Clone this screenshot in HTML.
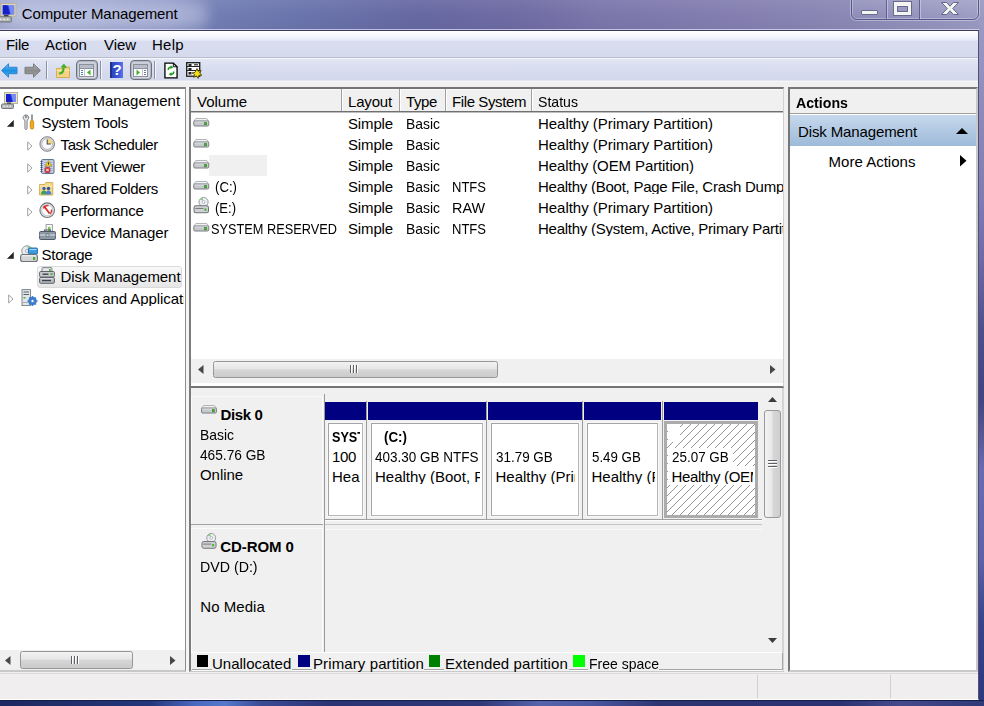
<!DOCTYPE html>
<html><head><meta charset="utf-8"><title>Computer Management</title>
<style>
html,body{margin:0;padding:0;}
body{width:984px;height:706px;overflow:hidden;position:relative;font-family:"Liberation Sans",sans-serif;font-size:15px;color:#000;background:#8d8cba;}
.a{position:absolute;box-sizing:border-box;}
.t{position:absolute;white-space:nowrap;color:#000;}
svg{position:absolute;overflow:visible;}
</style></head><body>
<!-- aero frame -->
<div class="a" id="titlebar" style="left:0;top:0;width:984px;height:31px;background:linear-gradient(90deg,#a6add2 0,#9fa8d2 80px,#8d97c6 170px,#727db4 215px,#6a74ac 300px,#6668a2 420px,#6f6ba4 520px,#7b76ab 600px,#8580b0 760px,#8b88b6 850px,#9a9ac3 984px);"></div>
<div class="a" style="left:0;top:0;width:984px;height:31px;background:linear-gradient(180deg,rgba(255,255,255,.07) 0,rgba(255,255,255,0) 50%,rgba(0,0,0,.03) 100%);"></div>
<div class="a" style="left:8px;top:3px;width:200px;height:24px;border-radius:12px;background:rgba(225,228,245,.38);filter:blur(7px);"></div>
<div class="a" id="rframe" style="left:978px;top:20px;width:6px;height:686px;background:linear-gradient(180deg,#9a9ac3 0,#8f8cba 80px,#807bb0 180px,#6f6aa0 240px,#4d5089 310px,#40457f 380px,#55558c 410px,#686db0 450px,#5c62a6 540px,#3a4488 600px,#2b387a 686px);"></div>
<div class="a" id="bframe" style="left:0;top:700px;width:984px;height:6px;border-top:1px solid #151d4a;background:linear-gradient(90deg,#1c2860 0,#24367a 150px,#4a68c0 195px,#5478cc 225px,#3a4a94 262px,#2a3474 330px,#2e3878 480px,#5664ac 540px,#4a58a0 590px,#2c3472 660px,#2a3272 840px,#454a8c 900px,#2f3878 984px);"></div>
<div class="a" style="left:0;top:29px;width:979px;height:1px;background:rgba(225,228,245,.7);"></div>
<!-- caption buttons -->
<div class="a" style="left:851px;top:-6px;width:128px;height:26px;border:1px solid #55578c;border-radius:0 0 6px 6px;box-shadow:0 0 0 1px rgba(255,255,255,.35), inset 0 0 0 1px rgba(255,255,255,.3);background:linear-gradient(180deg,rgba(255,255,255,.12),rgba(255,255,255,.02));"></div>
<div class="a" style="left:886px;top:0;width:1px;height:19px;background:#5f6095;box-shadow:1px 0 0 rgba(255,255,255,.35);"></div>
<div class="a" style="left:919px;top:0;width:1px;height:19px;background:#5f6095;box-shadow:1px 0 0 rgba(255,255,255,.35);"></div>
<div class="a" style="left:861px;top:10px;width:17px;height:5px;background:#f4f4f0;border:1px solid #6a6a90;border-radius:1px;"></div>
<div class="a" style="left:893.500px;top:1.500px;width:17px;height:13px;border:3.500px solid #f4f4f0;border-top-width:4px;outline:1px solid #6a6a90;box-shadow:inset 0 0 0 1px #6a6a90;"></div>
<svg style="left:940px;top:1px" width="20" height="15" viewBox="0 0 20 15"><path d="M1.500 1.500h5.200L10 5.200l3.300-3.700h5.200L12.700 7.500l5.800 6h-5.200L10 9.800l-3.300 3.700H1.500l5.800-6z" fill="#f4f4f0" stroke="#66678f" stroke-width="1"/></svg>

<!-- client area -->
<div class="a" style="left:0;top:30px;width:979px;height:670px;background:#f0f0f0;border-bottom:1px solid #fff;border-top:1px solid #3b3b5e;border-right:1px solid #50507a;"></div>
<!-- menu bar -->
<div class="a" style="left:0;top:31px;width:978px;height:26px;background:linear-gradient(180deg,#ffffff 0,#f6f8fd 5px,#e9ecf8 9px,#d8ddf0 10px,#d5daed 100%);"></div>
<div class="a" style="left:0;top:57px;width:978px;height:1px;background:#b9bccb;"></div>
<div class="a" style="left:0;top:58px;width:978px;height:1px;background:#f6f7fc;"></div>
<!-- toolbar -->
<div class="a" style="left:0;top:59px;width:978px;height:21px;background:linear-gradient(180deg,#e2e6f4 0,#dadff0 8px,#d4d9ec 16px,#d3d8ec 100%);"></div>
<div class="a" style="left:0;top:80px;width:978px;height:1px;background:#e3e6f0;"></div>
<div class="a" style="left:0;top:81px;width:978px;height:1px;background:#f4f5f8;"></div>
<svg style="left:1px;top:63px" width="17" height="15" viewBox="0 0 17 15"><defs><linearGradient id="gb" x1="0" y1="0" x2="0" y2="1"><stop offset="0" stop-color="#6fc3f5"/><stop offset=".5" stop-color="#1e8fe0"/><stop offset="1" stop-color="#49aef0"/></linearGradient><linearGradient id="gg" x1="0" y1="0" x2="0" y2="1"><stop offset="0" stop-color="#b8b8b8"/><stop offset=".5" stop-color="#8a8a8a"/><stop offset="1" stop-color="#a8a8a8"/></linearGradient></defs><path d="M0.600 7.500L7.500 0.800V4.300H16V10.700H7.500V14.200z" fill="url(#gb)" stroke="#2a86d4" stroke-width="1" stroke-linejoin="round"/></svg>
<svg style="left:24px;top:63px" width="17" height="15" viewBox="0 0 17 15"><path d="M16.400 7.500L9.500 0.800V4.300H1V10.700H9.500V14.200z" fill="url(#gg)" stroke="#7b7b7b" stroke-width="1" stroke-linejoin="round"/></svg>
<div class="a" style="left:46px;top:61px;width:1px;height:18px;background:#8b90a3;"></div>
<div class="a" style="left:47px;top:61px;width:1px;height:18px;background:#f3f5fb;"></div>
<div class="a" style="left:100px;top:61px;width:1px;height:18px;background:#8b90a3;"></div>
<div class="a" style="left:101px;top:61px;width:1px;height:18px;background:#f3f5fb;"></div>
<div class="a" style="left:154px;top:61px;width:1px;height:18px;background:#8b90a3;"></div>
<div class="a" style="left:155px;top:61px;width:1px;height:18px;background:#f3f5fb;"></div>
<svg style="left:55px;top:62px" width="16" height="17" viewBox="0 0 16 17"><path d="M1.500 6.500h5l1.500-1.500h6.500v10.500h-13z" fill="#f3d486" stroke="#d9ad4c"/><path d="M1.500 8.500h13" stroke="#fbe8b0"/><path d="M4 11.500c3 0 4.500-2 4.500-5.500" fill="none" stroke="#3fae2a" stroke-width="2.200"/><path d="M5.500 5.500L9 1.500l3 4.500z" fill="#3fae2a"/></svg>
<div class="a" style="left:75.5px;top:60px;width:22px;height:20px;border:1px solid #6c7180;border-radius:4px;background:linear-gradient(180deg,#c9ccd6,#d8dae2);box-shadow:inset 0 0 0 1px #b4b8c4;"></div>
<div class="a" style="left:129.5px;top:60px;width:22px;height:20px;border:1px solid #6c7180;border-radius:4px;background:linear-gradient(180deg,#c9ccd6,#d8dae2);box-shadow:inset 0 0 0 1px #b4b8c4;"></div>
<svg style="left:79px;top:64px" width="15" height="13" viewBox="0 0 15 13"><rect x=".5" y=".5" width="14" height="12" fill="#fff" stroke="#8a8f9c"/><rect x="1" y="1" width="13" height="3" fill="#b9bdc9"/><path d="M1 4.500h13" stroke="#8a8f9c"/><path d="M5.500 4.500v8" stroke="#c0c4cc"/><path d="M2 6.500h2M2 8.500h2M2 10.500h2" stroke="#4a7fd0"/><path d="M11.500 5.500v6L8 8.500z" fill="#43b02a"/></svg>
<svg style="left:133px;top:64px" width="15" height="13" viewBox="0 0 15 13"><rect x=".5" y=".5" width="14" height="12" fill="#fff" stroke="#8a8f9c"/><rect x="1" y="1" width="13" height="3" fill="#b9bdc9"/><path d="M1 4.500h13" stroke="#8a8f9c"/><path d="M9.500 4.500v8" stroke="#c0c4cc"/><path d="M11 6.500h2M11 8.500h2M11 10.500h2" stroke="#6b7a90"/><path d="M3.500 5.500v6L7 8.500z" fill="#43b02a"/></svg>
<div class="a" style="left:110px;top:62px;width:13px;height:16px;background:linear-gradient(90deg,#2b3fb8 0,#3b55d8 60%,#5a74e8 100%);box-shadow:inset 2px 0 0 #20308f;"></div>
<div class="t" style="left:112.500px;top:62px;font-size:15px;line-height:16px;font-weight:bold;color:#fff;">?</div>
<svg style="left:163.5px;top:61.5px" width="14" height="17" viewBox="0 0 15 18"><path d="M1 1h9l4 4v12H1z" fill="#fff" stroke="#000" stroke-width="1.400"/><path d="M10 1v4h4" fill="none" stroke="#000"/><path d="M4.500 8.500c0-2 1.500-3 3-3" fill="none" stroke="#1e9a1e" stroke-width="1.600"/><path d="M7 3.500l3 2-3 2z" fill="#1e9a1e"/><path d="M10.500 10c0 2-1.500 3-3 3" fill="none" stroke="#1e9a1e" stroke-width="1.600"/><path d="M8 11l-3 2 3 2z" fill="#1e9a1e"/></svg>
<svg style="left:186px;top:62px" width="17" height="17" viewBox="0 0 17 17"><rect x=".7" y=".7" width="13" height="13.500" fill="#fff" stroke="#222" stroke-width="1.400"/><path d="M1 4.500h13M1 8.500h13" stroke="#222"/><rect x="2.500" y="2" width="3" height="2" fill="#222"/><rect x="8" y="2" width="4" height="1.500" fill="#555"/><rect x="2.500" y="6" width="3" height="2" fill="#222"/><rect x="2.500" y="10" width="3" height="2.500" fill="#222"/><path d="M11 6.500l1.200 2.800 3-.8-1.600 2.500 2.200 2.200-3 .2-.6 3-1.800-2.500-2.600 1.400.8-2.900-2.600-1.500 3-.5z" fill="#f5e11a" stroke="#3a3300" stroke-width=".8"/></svg>

<!-- left tree pane -->
<div class="a" style="left:0;top:87px;width:186px;height:585px;background:#fff;border-top:2px solid #7d7d7d;border-right:1px solid #8e8e8e;border-bottom:2px solid #c8c8c8;"></div>
<div class="a" style="left:186px;top:87px;width:3px;height:585px;background:#f5f5f5;"></div>
<div class="a" style="left:37px;top:266px;width:145px;height:22px;border:1px solid #dadada;border-radius:3px;background:linear-gradient(180deg,#f9f9f9,#e6e6e6);"></div>
<svg style="left:0.5px;top:91.5px" width="17" height="17" viewBox="0 0 17 17"><rect x="3.500" y=".5" width="13" height="11" fill="#e9e2c9" stroke="#b9b4a0"/><rect x="5" y="2" width="10" height="8" fill="#2a3fe0"/><path d="M10 2h5v8h-3z" fill="#8f9df5" opacity=".8"/><path d="M5 2h4l2 8H5z" fill="#1420c8"/><path d="M6 10.500h4v2H6z" fill="#3a3a3a"/><rect x=".5" y="12" width="12" height="4.500" rx="1" fill="#b3b7b7" stroke="#767b7b"/><path d="M2.500 13.500h1.500v1.500h-1.500zM5.500 13.500h1.500v1.500h-1.500zM8.500 13.500h1.500v1.500h-1.500z" fill="#e6e8e8"/></svg>
<svg style="left:7px;top:119.5px" width="7" height="7" viewBox="0 0 7 7"><path d="M6.500 .5v6h-6z" fill="#262626" stroke="#262626" stroke-width=".6"/></svg>
<svg style="left:7px;top:251.5px" width="7" height="7" viewBox="0 0 7 7"><path d="M6.500 .5v6h-6z" fill="#262626" stroke="#262626" stroke-width=".6"/></svg>
<svg style="left:27px;top:141px" width="6" height="10" viewBox="0 0 6 10"><path d="M.7 1L5 5 .7 9z" fill="#fff" stroke="#a0a0a0" stroke-width="1"/></svg>
<svg style="left:27px;top:163px" width="6" height="10" viewBox="0 0 6 10"><path d="M.7 1L5 5 .7 9z" fill="#fff" stroke="#a0a0a0" stroke-width="1"/></svg>
<svg style="left:27px;top:185px" width="6" height="10" viewBox="0 0 6 10"><path d="M.7 1L5 5 .7 9z" fill="#fff" stroke="#a0a0a0" stroke-width="1"/></svg>
<svg style="left:27px;top:207px" width="6" height="10" viewBox="0 0 6 10"><path d="M.7 1L5 5 .7 9z" fill="#fff" stroke="#a0a0a0" stroke-width="1"/></svg>
<svg style="left:8px;top:294px" width="6" height="10" viewBox="0 0 6 10"><path d="M.7 1L5 5 .7 9z" fill="#fff" stroke="#a0a0a0" stroke-width="1"/></svg>
<svg style="left:22px;top:114px" width="13" height="16" viewBox="0 0 13 16"><path d="M3.500 .8c-1.800.6-2.600 2-2.300 3.500.2 1 .9 1.700 1.700 2v8.200c0 .6.500 1 1.100 1s1.100-.4 1.100-1V6.300c.9-.4 1.500-1.200 1.600-2.200C6.900 2.600 6 1.300 4.700.8v2.700H3.500z" fill="#dfe1e3" stroke="#777b80" stroke-width=".9"/><path d="M10 .5v6" stroke="#6d7175" stroke-width="1.400"/><rect x="8.300" y="6.500" width="3.400" height="8.500" rx="1.500" fill="#f2ac18" stroke="#c07d00" stroke-width=".8"/></svg>
<svg style="left:39px;top:136px" width="17" height="16" viewBox="0 0 17 16"><circle cx="8.200" cy="8" r="7.300" fill="#d9dbde" stroke="#7d8186" stroke-width="1"/><circle cx="8.200" cy="8" r="5.400" fill="#fbfbfc" stroke="#a9adb2" stroke-width=".8"/><path d="M8.200 8V2.600A5.400 5.400 0 0 1 13.600 8z" fill="#f3d57a"/><path d="M8.200 3.500V8h3.600" fill="none" stroke="#4a4e55" stroke-width="1.100"/></svg>
<svg style="left:40px;top:159px" width="15" height="15" viewBox="0 0 15 15"><rect x="1.500" y=".6" width="12.500" height="13.800" rx="1" fill="#c9d3e8" stroke="#56698f"/><path d="M4 3.500h8.500M4 5.500h8.500M4 7.500h8.500M4 9.500h8.500M4 11.500h8.500" stroke="#8fa2c8" stroke-width=".8"/><path d="M.5 2.500h2M.5 4.500h2M.5 6.500h2M.5 8.500h2M.5 10.500h2M.5 12.500h2" stroke="#3d4f73" stroke-width="1"/><path d="M8.500 1.500l3.200 5.500H5.300z" fill="#f6cf2a" stroke="#b18b00" stroke-width=".6"/><path d="M8.500 3.500v2" stroke="#222" stroke-width="1"/><rect x="5" y="8.500" width="5" height="5" rx="1" fill="#e03a3a" stroke="#9e1f1f" stroke-width=".6"/><path d="M6.300 9.800l2.400 2.400M8.700 9.800l-2.400 2.400" stroke="#fff" stroke-width="1"/></svg>
<svg style="left:39px;top:181px" width="15" height="15" viewBox="0 0 15 15"><path d="M.6 3.500h5l1.200-2h7v12.500H.6z" fill="#f4d98c" stroke="#d2a84a" stroke-width=".9"/><path d="M1 5h12.500" stroke="#fbeab8"/><circle cx="5" cy="7.500" r="1.700" fill="#3a5fb0"/><path d="M2 13.500c0-3 1.300-4 3-4s3 1 3 4z" fill="#3f9d5a"/><circle cx="9.500" cy="7.500" r="1.700" fill="#2f4f9a"/><path d="M6.800 13.500c0-3 1.200-4 2.700-4s2.800 1 2.800 4z" fill="#4a7fd0"/></svg>
<svg style="left:39px;top:202px" width="17" height="17" viewBox="0 0 17 17"><circle cx="8.200" cy="8.200" r="7.300" fill="#e1e3e6" stroke="#70757b" stroke-width="1.100"/><circle cx="8.200" cy="8.200" r="5.500" fill="#fdfdfd" stroke="#b4b8bd" stroke-width=".7"/><path d="M5 4l5.500 7.500" stroke="#d8231f" stroke-width="1.700"/><path d="M4.500 6.500a4.500 4.500 0 0 1 5-2.700" fill="none" stroke="#d8231f" stroke-width="1.300"/><path d="M12.500 7.500a4.500 4.500 0 0 1-1.500 4.300" fill="none" stroke="#d8231f" stroke-width="1.300"/></svg>
<svg style="left:39px;top:224px" width="17" height="16" viewBox="0 0 17 16"><rect x="7" y=".6" width="6.500" height="7.500" fill="#f4f6f4" stroke="#8a8f94" stroke-width=".8"/><rect x="9" y="3" width="2.500" height="4" fill="#7bc45c"/><path d="M5.500 7.500V6h6v1.500" fill="none" stroke="#555b62" stroke-width="1.200"/><rect x=".6" y="7.500" width="15.800" height="8" rx="1" fill="#8f9aa8" stroke="#4f5965" stroke-width="1"/><path d="M.6 11h15.800" stroke="#dfe4ea" stroke-width="1"/><rect x="7" y="10" width="3" height="2.500" fill="#d5dae0" stroke="#4f5965" stroke-width=".6"/></svg>
<svg style="left:20px;top:245px" width="18" height="17" viewBox="0 0 18 17"><circle cx="7" cy="6" r="5.300" fill="#e8ebee" stroke="#8e9499" stroke-width=".9"/><circle cx="7" cy="6" r="1.500" fill="#fff" stroke="#8e9499" stroke-width=".7"/><path d="M7 .9a5 5 0 0 1 4 2.200L8.300 5z" fill="#8fd07e" opacity=".8"/><rect x="8.500" y="3" width="9" height="6" rx="1" fill="#3e9bdc" stroke="#1d6fae" stroke-width=".9"/><path d="M9.500 4.500h7" stroke="#a8d8f6" stroke-width="1"/><rect x=".6" y="9.500" width="16.800" height="7" rx="2" fill="#d3d5d7" stroke="#6f7478" stroke-width="1.100"/><path d="M2 10.800h14" stroke="#f4f5f6"/><rect x="13" y="12" width="2.200" height="3" fill="#4caf2e"/></svg>
<svg style="left:39px;top:267px" width="16" height="17" viewBox="0 0 16 17"><rect x="3" y=".6" width="10" height="5" rx="1" fill="#e4e6e8" stroke="#74797e" stroke-width=".9"/><rect x="10" y="2" width="1.800" height="2" fill="#58b03a"/><rect x=".6" y="4.500" width="14.800" height="5.500" rx="1.200" fill="#c9cccf" stroke="#5f6469" stroke-width="1"/><path d="M3.500 7.200h6" stroke="#3e4246" stroke-width="1.400"/><rect x="11.500" y="6" width="2" height="2.200" fill="#58b03a"/><rect x=".6" y="10.500" width="14.800" height="5.800" rx="1.200" fill="#b5b9bd" stroke="#5f6469" stroke-width="1"/><path d="M3 13.500h9" stroke="#3e4246" stroke-width="1.400"/><path d="M1.500 11.700h13" stroke="#eceef0" stroke-width=".8"/></svg>
<svg style="left:21px;top:289px" width="17" height="18" viewBox="0 0 17 18"><rect x="1" y=".6" width="8.500" height="16" fill="#e3e6e9" stroke="#767c83" stroke-width=".9"/><path d="M2.500 3h5.500M2.500 5.500h5.500" stroke="#5a6067" stroke-width="1.200"/><rect x="2.500" y="8" width="2" height="1.500" fill="#4caf2e"/><path d="M1 13.500h8.500" stroke="#a9aeb4"/><g transform="translate(11.500 12)"><circle r="3.300" fill="none" stroke="#3a7ed0" stroke-width="2"/><path d="M0-5v10M-5 0h10M-3.500-3.500l7 7M3.500-3.500l-7 7" stroke="#3a7ed0" stroke-width="1.400"/><circle r="1.600" fill="#fff" stroke="#2a62ad" stroke-width=".6"/></g></svg>
<!-- tree hscroll -->
<div class="a" style="left:0;top:650px;width:185px;height:20px;background:#f0f0f0;"></div>
<div class="a" style="left:20px;top:651px;width:113px;height:18px;border:1px solid #979797;border-radius:2.500px;background:linear-gradient(180deg,#f2f2f2 0,#e6e6e6 45%,#d6d6d6 52%,#cbcbcb 100%);"></div>
<div class="a" style="left:71px;top:656px;width:1px;height:8px;background:#5d6066;box-shadow:3px 0 0 #5d6066,6px 0 0 #5d6066,1px 0 0 #fff,4px 0 0 #fff,7px 0 0 #fff;"></div>
<svg style="left:5px;top:655.500px" width="5.500" height="9" viewBox="0 0 5.500 9"><path d="M5.500 0v9L0 4.500z" fill="#484848"/></svg>
<svg style="left:170px;top:655.500px" width="5.500" height="9" viewBox="0 0 5.500 9"><path d="M0 0v9l5.500-4.500z" fill="#484848"/></svg>

<!-- volume list -->
<div class="a" style="left:189px;top:87px;width:595px;height:301px;background:#fff;border:2px solid #747474;border-left-color:#7c7c7c;border-right:1px solid #d0d0d0;"></div>
<div class="a" style="left:191px;top:89px;width:592px;height:22px;background:#f0f0f0;border-top:1px solid #fafafa;"></div>
<div class="a" style="left:191px;top:111px;width:592px;height:1px;background:#707070;"></div><div class="a" style="left:191px;top:112px;width:592px;height:1px;background:#bdbdbd;"></div>
<div class="a hs" style="left:341px;"></div><div class="a hs" style="left:399px;"></div><div class="a hs" style="left:445px;"></div><div class="a hs" style="left:531px;"></div>
<style>.hs{top:89px;width:2px;height:22px;background:#a0a0a0;border-right:1px solid #fff;}</style>
<div class="a" style="left:209px;top:155px;width:58px;height:21px;background:#f0f0f0;"></div>
<!-- list hscroll -->
<div class="a" style="left:191px;top:359px;width:592px;height:24px;background:#f0f0f0;"></div>
<div class="a" style="left:213px;top:361px;width:285px;height:17px;border:1px solid #979797;border-radius:2.500px;background:linear-gradient(180deg,#f2f2f2 0,#e6e6e6 45%,#d6d6d6 52%,#cbcbcb 100%);"></div>
<div class="a" style="left:350px;top:365px;width:1px;height:8px;background:#5d6066;box-shadow:3px 0 0 #5d6066,6px 0 0 #5d6066,1px 0 0 #fff,4px 0 0 #fff,7px 0 0 #fff;"></div>
<svg style="left:198px;top:365px" width="5.500" height="9" viewBox="0 0 5.500 9"><path d="M5.500 0v9L0 4.500z" fill="#484848"/></svg>
<svg style="left:769.500px;top:365px" width="5.500" height="9" viewBox="0 0 5.500 9"><path d="M0 0v9l5.500-4.500z" fill="#484848"/></svg>

<!-- disk graphical pane -->
<div class="a" style="left:189px;top:388px;width:595px;height:284px;background:#f0f0f0;border-left:2px solid #7c7c7c;border-bottom:2px solid #c9c9c9;border-right:2px solid #d4d4d4;"></div>
<div class="a" style="left:191px;top:396px;width:131px;height:1px;background:#fafafa;"></div>
<div class="a" style="left:191px;top:396px;width:1px;height:128px;background:#fafafa;"></div>
<div class="a" style="left:322px;top:396px;width:1px;height:128px;background:#fbfbfb;"></div>
<div class="a" style="left:324px;top:394px;width:1px;height:258px;background:#9a9a9a;"></div>
<div class="a" style="left:191px;top:524px;width:132px;height:1px;background:#a0a0a0;"></div>
<div class="a" style="left:325px;top:519px;width:437px;height:1px;background:#a0a0a0;"></div>
<div class="a" style="left:325px;top:520px;width:437px;height:1px;background:#fdfdfd;"></div>
<div class="a" style="left:325px;top:524px;width:437px;height:1px;background:#c4c4c4;"></div>
<div class="a" style="left:191px;top:528px;width:131px;height:1px;background:#fafafa;"></div>
<div class="a" style="left:325px;top:529px;width:437px;height:1px;background:#fafafa;"></div>
<div class="a" style="left:191px;top:528px;width:1px;height:124px;background:#fafafa;"></div>
<div class="a" style="left:322px;top:528px;width:1px;height:124px;background:#fbfbfb;"></div>
<div class="a" style="left:325px;top:402px;width:40.5px;height:18px;background:#000080;"></div>
<div class="a" style="left:328px;top:423px;width:34.5px;height:93px;background:#fff;border:1px solid #a3a3a3;border-right-color:#b8b8b8;border-bottom-color:#b8b8b8;box-shadow:0 0 0 1px #f8f8f8;"></div>
<div class="a" style="left:368px;top:402px;width:117.5px;height:18px;background:#000080;"></div>
<div class="a" style="left:366.4px;top:401px;width:1px;height:118px;background:#9c9c9c;"></div>
<div class="a" style="left:371px;top:423px;width:111.5px;height:93px;background:#fff;border:1px solid #a3a3a3;border-right-color:#b8b8b8;border-bottom-color:#b8b8b8;box-shadow:0 0 0 1px #f8f8f8;"></div>
<div class="a" style="left:488px;top:402px;width:93.5px;height:18px;background:#000080;"></div>
<div class="a" style="left:486.4px;top:401px;width:1px;height:118px;background:#9c9c9c;"></div>
<div class="a" style="left:491px;top:423px;width:87.5px;height:93px;background:#fff;border:1px solid #a3a3a3;border-right-color:#b8b8b8;border-bottom-color:#b8b8b8;box-shadow:0 0 0 1px #f8f8f8;"></div>
<div class="a" style="left:583.7px;top:402px;width:77.29999999999995px;height:18px;background:#000080;"></div>
<div class="a" style="left:582.1px;top:401px;width:1px;height:118px;background:#9c9c9c;"></div>
<div class="a" style="left:586.7px;top:423px;width:71.3px;height:93px;background:#fff;border:1px solid #a3a3a3;border-right-color:#b8b8b8;border-bottom-color:#b8b8b8;box-shadow:0 0 0 1px #f8f8f8;"></div>
<div class="a" style="left:663.8px;top:402px;width:94.5px;height:18px;background:#000080;"></div>
<div class="a" style="left:662.2px;top:401px;width:1px;height:118px;background:#9c9c9c;"></div>
<div class="a" style="left:664.2px;top:421px;width:93.9px;height:97px;border:3px solid #ababab;background:#fff repeating-linear-gradient(135deg,transparent 0,transparent 4.95px,#959595 4.95px,#959595 5.657px);"></div>
<div class="a" style="left:668px;top:424px;width:11.500px;height:18px;background:#fff;"></div>
<div class="a" style="left:668px;top:448px;width:64.500px;height:18px;background:#fff;"></div>
<div class="a" style="left:668px;top:466px;width:86.500px;height:19px;background:#fff;"></div>
<div class="a" style="left:763px;top:389px;width:19px;height:263px;background:#f0f0f0;"></div>
<div class="a" style="left:764px;top:410px;width:17px;height:108px;border:1px solid #979797;border-radius:3px;background:linear-gradient(90deg,#f3f3f3 0,#e8e8e8 45%,#d6d6d6 55%,#cfcfcf 100%);"></div>
<div class="a" style="left:768px;top:460px;width:9px;height:1px;background:#5d6066;box-shadow:0 3px 0 #5d6066,0 6px 0 #5d6066,0 1px 0 #fff,0 4px 0 #fff,0 7px 0 #fff;"></div>
<svg style="left:768px;top:396.500px" width="9" height="5"><path d="M0 5h9L4.500 0z" fill="#3c3c3c"/></svg>
<svg style="left:768px;top:637.500px" width="9" height="5"><path d="M0 0h9L4.500 5z" fill="#3c3c3c"/></svg>
<div class="a" style="left:191px;top:652px;width:591px;height:1px;background:#fdfdfd;"></div>
<div class="a" style="left:192px;top:669px;width:590px;height:1px;background:#a6a6a6;"></div>
<div class="a" style="left:192px;top:670px;width:591px;height:1px;background:#fbfbfb;"></div>
<div class="a" style="left:782px;top:653px;width:1px;height:17px;background:#a6a6a6;"></div>
<div class="a" style="left:211.5px;top:655px;width:80px;height:16px;background:#f0f0f0;"></div>
<div class="a" style="left:312px;top:655px;width:112px;height:16px;background:#f0f0f0;"></div>
<div class="a" style="left:443.5px;top:655px;width:125px;height:16px;background:#f0f0f0;"></div>
<div class="a" style="left:588px;top:655px;width:71px;height:16px;background:#f0f0f0;"></div>
<div class="a" style="left:196.5px;top:655px;width:11.500px;height:12px;background:#000000;"></div>
<div class="a" style="left:298px;top:655px;width:11.500px;height:12px;background:#000080;"></div>
<div class="a" style="left:428.5px;top:655px;width:11.500px;height:12px;background:#008000;"></div>
<div class="a" style="left:573px;top:655px;width:11.500px;height:12px;background:#00ff00;"></div>

<!-- actions pane -->
<div class="a" style="left:788px;top:87px;width:190px;height:585px;background:#fff;border:2px solid #767676;border-right:2px solid #c9c9c9;border-bottom:2px solid #c9c9c9;"></div>
<div class="a" style="left:790px;top:89px;width:186px;height:24px;background:#f0f0f0;"></div>
<div class="a" style="left:790px;top:113px;width:186px;height:1px;background:#a0a0a0;"></div>
<div class="a" style="left:790px;top:115px;width:186px;height:30.500px;background:linear-gradient(180deg,#c6d8ec 0,#b2c9e3 50%,#9dbad9 100%);"></div>
<svg style="left:955.500px;top:127.500px" width="12" height="6"><path d="M0 6h12L6 0z" fill="#000"/></svg>
<svg style="left:960px;top:155px" width="6.500" height="11.500" viewBox="0 0 6.500 11.500"><path d="M0 0v11.500l6.500-5.750z" fill="#000"/></svg>

<!-- status bar -->
<div class="a" style="left:0;top:673px;width:978px;height:26px;background:#f0eeee;border-top:1px solid #dcdcdc;"></div>
<div class="a" style="left:757px;top:675px;width:1px;height:23px;background:#d0d0d0;"></div>
<div class="a" style="left:890px;top:675px;width:1px;height:23px;background:#d0d0d0;"></div>

<svg style="left:192.5px;top:118px" width="16.5" height="8.5" viewBox="0 0 17 9"><path d="M2.800 .5h11.400l2.300 3H.5z" fill="#f1f2f3" stroke="#9a9ea2" stroke-width=".8" stroke-linejoin="round"/><rect x=".55" y="3.200" width="15.900" height="5.300" rx="1.300" fill="#c6c9cc" stroke="#74787c" stroke-width="1"/><path d="M1.500 4.200h14" stroke="#e4e6e8" stroke-width=".9"/><rect x="12" y="4.500" width="2.300" height="2.800" fill="#46b02a" stroke="#2f7f1e" stroke-width=".5"/></svg>
<svg style="left:192.5px;top:139px" width="16.5" height="8.5" viewBox="0 0 17 9"><path d="M2.800 .5h11.400l2.300 3H.5z" fill="#f1f2f3" stroke="#9a9ea2" stroke-width=".8" stroke-linejoin="round"/><rect x=".55" y="3.200" width="15.900" height="5.300" rx="1.300" fill="#c6c9cc" stroke="#74787c" stroke-width="1"/><path d="M1.500 4.200h14" stroke="#e4e6e8" stroke-width=".9"/><rect x="12" y="4.500" width="2.300" height="2.800" fill="#46b02a" stroke="#2f7f1e" stroke-width=".5"/></svg>
<svg style="left:192.5px;top:160px" width="16.5" height="8.5" viewBox="0 0 17 9"><path d="M2.800 .5h11.400l2.300 3H.5z" fill="#f1f2f3" stroke="#9a9ea2" stroke-width=".8" stroke-linejoin="round"/><rect x=".55" y="3.200" width="15.900" height="5.300" rx="1.300" fill="#c6c9cc" stroke="#74787c" stroke-width="1"/><path d="M1.500 4.200h14" stroke="#e4e6e8" stroke-width=".9"/><rect x="12" y="4.500" width="2.300" height="2.800" fill="#46b02a" stroke="#2f7f1e" stroke-width=".5"/></svg>
<svg style="left:192.5px;top:181px" width="16.5" height="8.5" viewBox="0 0 17 9"><path d="M2.800 .5h11.400l2.300 3H.5z" fill="#f1f2f3" stroke="#9a9ea2" stroke-width=".8" stroke-linejoin="round"/><rect x=".55" y="3.200" width="15.900" height="5.300" rx="1.300" fill="#c6c9cc" stroke="#74787c" stroke-width="1"/><path d="M1.500 4.200h14" stroke="#e4e6e8" stroke-width=".9"/><rect x="12" y="4.500" width="2.300" height="2.800" fill="#46b02a" stroke="#2f7f1e" stroke-width=".5"/></svg>
<svg style="left:192.5px;top:223px" width="16.5" height="8.5" viewBox="0 0 17 9"><path d="M2.800 .5h11.400l2.300 3H.5z" fill="#f1f2f3" stroke="#9a9ea2" stroke-width=".8" stroke-linejoin="round"/><rect x=".55" y="3.200" width="15.900" height="5.300" rx="1.300" fill="#c6c9cc" stroke="#74787c" stroke-width="1"/><path d="M1.500 4.200h14" stroke="#e4e6e8" stroke-width=".9"/><rect x="12" y="4.500" width="2.300" height="2.800" fill="#46b02a" stroke="#2f7f1e" stroke-width=".5"/></svg>
<svg style="left:192.5px;top:196.5px" width="16.500" height="16.500" viewBox="0 0 17 18"><circle cx="11" cy="5.500" r="5" fill="#eef1f4" stroke="#8d9297"/><circle cx="11" cy="5.500" r="1.600" fill="#fff" stroke="#9aa0a6" stroke-width=".8"/><path d="M7 3a4.700 4.700 0 0 1 3-2.100l.6 3z" fill="#7cc96a" opacity=".9"/><rect x=".6" y="9.600" width="15.800" height="7.600" rx="2" fill="#cfd1d3" stroke="#6f7376" stroke-width="1.100"/><path d="M2 12.500h9" stroke="#6f7376"/><rect x="12" y="12.500" width="2.200" height="2.500" fill="#4caf2e"/></svg>
<svg style="left:201px;top:405.3px" width="16" height="8.6" viewBox="0 0 17 9"><path d="M2.800 .5h11.400l2.300 3H.5z" fill="#f1f2f3" stroke="#9a9ea2" stroke-width=".8" stroke-linejoin="round"/><rect x=".55" y="3.200" width="15.900" height="5.300" rx="1.300" fill="#c6c9cc" stroke="#74787c" stroke-width="1"/><path d="M1.500 4.200h14" stroke="#e4e6e8" stroke-width=".9"/><rect x="12" y="4.500" width="2.300" height="2.800" fill="#46b02a" stroke="#2f7f1e" stroke-width=".5"/></svg>
<svg style="left:201px;top:533px" width="16" height="16" viewBox="0 0 17 18"><circle cx="11" cy="5.500" r="5" fill="#eef1f4" stroke="#8d9297"/><circle cx="11" cy="5.500" r="1.600" fill="#fff" stroke="#9aa0a6" stroke-width=".8"/><path d="M7 3a4.700 4.700 0 0 1 3-2.100l.6 3z" fill="#7cc96a" opacity=".9"/><rect x=".6" y="9.600" width="15.800" height="7.600" rx="2" fill="#cfd1d3" stroke="#6f7376" stroke-width="1.100"/><path d="M2 12.500h9" stroke="#6f7376"/><rect x="12" y="12.500" width="2.200" height="2.500" fill="#4caf2e"/></svg>
<svg style="left:-3.5px;top:2.5px" width="19.500" height="19.500" viewBox="0 0 17 17"><rect x="3.500" y=".5" width="13" height="11" fill="#e9e2c9" stroke="#b9b4a0"/><rect x="5" y="2" width="10" height="8" fill="#2a3fe0"/><path d="M10 2h5v8h-3z" fill="#8f9df5" opacity=".8"/><path d="M5 2h4l2 8H5z" fill="#1420c8"/><path d="M6 10.500h4v2H6z" fill="#3a3a3a"/><rect x=".5" y="12" width="12" height="4.500" rx="1" fill="#b3b7b7" stroke="#767b7b"/><path d="M2.500 13.500h1.500v1.500h-1.500zM5.500 13.500h1.500v1.500h-1.500zM8.500 13.500h1.500v1.500h-1.500z" fill="#e6e8e8"/></svg>
<div class="t" style="left:21.7px;top:6.00px;font-size:15px;line-height:15px;letter-spacing:-0.084px;">Computer Management</div>
<div class="t" style="left:6px;top:37.30px;font-size:15px;line-height:15px;letter-spacing:-0.293px;">File</div>
<div class="t" style="left:45px;top:37.30px;font-size:15px;line-height:15px;letter-spacing:0.049px;">Action</div>
<div class="t" style="left:104px;top:37.30px;font-size:15px;line-height:15px;letter-spacing:-0.062px;">View</div>
<div class="t" style="left:152px;top:37.30px;font-size:15px;line-height:15px;letter-spacing:0.285px;">Help</div>
<div class="t" style="left:22.5px;top:93.30px;font-size:15px;line-height:15px;">Computer Management</div>
<div class="t" style="left:41.5px;top:115.30px;font-size:15px;line-height:15px;letter-spacing:-0.203px;">System Tools</div>
<div class="t" style="left:60.5px;top:137.30px;font-size:15px;line-height:15px;letter-spacing:-0.362px;">Task Scheduler</div>
<div class="t" style="left:60.5px;top:159.30px;font-size:15px;line-height:15px;letter-spacing:-0.301px;">Event Viewer</div>
<div class="t" style="left:60.5px;top:181.30px;font-size:15px;line-height:15px;letter-spacing:-0.362px;">Shared Folders</div>
<div class="t" style="left:60.5px;top:203.30px;font-size:15px;line-height:15px;letter-spacing:-0.261px;">Performance</div>
<div class="t" style="left:60.5px;top:225.30px;font-size:15px;line-height:15px;letter-spacing:-0.087px;">Device Manager</div>
<div class="t" style="left:41.5px;top:247.30px;font-size:15px;line-height:15px;letter-spacing:-0.221px;">Storage</div>
<div class="t" style="left:60.5px;top:269.30px;font-size:15px;line-height:15px;letter-spacing:-0.059px;">Disk Management</div>
<div class="t" style="left:41.5px;top:291.30px;font-size:15px;line-height:15px;letter-spacing:-0.092px;width:142px;overflow:hidden;">Services and Applications</div>
<div class="t" style="left:197px;top:94.30px;font-size:15px;line-height:15px;">Volume</div>
<div class="t" style="left:348px;top:94.30px;font-size:15px;line-height:15px;letter-spacing:-0.174px;">Layout</div>
<div class="t" style="left:406px;top:94.30px;font-size:15px;line-height:15px;letter-spacing:-0.383px;">Type</div>
<div class="t" style="left:452px;top:94.30px;font-size:15px;line-height:15px;letter-spacing:-0.396px;">File System</div>
<div class="t" style="left:538px;top:94.30px;font-size:15px;line-height:15px;"><span style="display:inline-block;transform-origin:0 0;transform:scaleX(0.9405)">Status</span></div>
<div class="t" style="left:348px;top:116.30px;font-size:15px;line-height:15px;letter-spacing:-0.143px;">Simple</div>
<div class="t" style="left:406px;top:116.30px;font-size:15px;line-height:15px;"><span style="display:inline-block;transform-origin:0 0;transform:scaleX(0.9267)">Basic</span></div>
<div class="t" style="left:348px;top:137.30px;font-size:15px;line-height:15px;letter-spacing:-0.143px;">Simple</div>
<div class="t" style="left:406px;top:137.30px;font-size:15px;line-height:15px;"><span style="display:inline-block;transform-origin:0 0;transform:scaleX(0.9267)">Basic</span></div>
<div class="t" style="left:348px;top:158.30px;font-size:15px;line-height:15px;letter-spacing:-0.143px;">Simple</div>
<div class="t" style="left:406px;top:158.30px;font-size:15px;line-height:15px;"><span style="display:inline-block;transform-origin:0 0;transform:scaleX(0.9267)">Basic</span></div>
<div class="t" style="left:348px;top:179.30px;font-size:15px;line-height:15px;letter-spacing:-0.143px;">Simple</div>
<div class="t" style="left:406px;top:179.30px;font-size:15px;line-height:15px;"><span style="display:inline-block;transform-origin:0 0;transform:scaleX(0.9267)">Basic</span></div>
<div class="t" style="left:348px;top:200.30px;font-size:15px;line-height:15px;letter-spacing:-0.143px;">Simple</div>
<div class="t" style="left:406px;top:200.30px;font-size:15px;line-height:15px;"><span style="display:inline-block;transform-origin:0 0;transform:scaleX(0.9267)">Basic</span></div>
<div class="t" style="left:348px;top:221.30px;font-size:15px;line-height:15px;letter-spacing:-0.143px;">Simple</div>
<div class="t" style="left:406px;top:221.30px;font-size:15px;line-height:15px;"><span style="display:inline-block;transform-origin:0 0;transform:scaleX(0.9267)">Basic</span></div>
<div class="t" style="left:452px;top:179.30px;font-size:15px;line-height:15px;"><span style="display:inline-block;transform-origin:0 0;transform:scaleX(0.8680)">NTFS</span></div>
<div class="t" style="left:452px;top:200.30px;font-size:15px;line-height:15px;"><span style="display:inline-block;transform-origin:0 0;transform:scaleX(0.9578)">RAW</span></div>
<div class="t" style="left:452px;top:221.30px;font-size:15px;line-height:15px;"><span style="display:inline-block;transform-origin:0 0;transform:scaleX(0.8680)">NTFS</span></div>
<div class="t" style="left:538px;top:116.30px;font-size:15px;line-height:15px;letter-spacing:-0.033px;">Healthy (Primary Partition)</div>
<div class="t" style="left:538px;top:137.30px;font-size:15px;line-height:15px;letter-spacing:-0.033px;">Healthy (Primary Partition)</div>
<div class="t" style="left:538px;top:158.30px;font-size:15px;line-height:15px;letter-spacing:-0.104px;">Healthy (OEM Partition)</div>
<div class="t" style="left:538px;top:179.30px;font-size:15px;line-height:15px;letter-spacing:-0.253px;width:245px;overflow:hidden;">Healthy (Boot, Page File, Crash Dump, Primary Partition)</div>
<div class="t" style="left:538px;top:200.30px;font-size:15px;line-height:15px;letter-spacing:-0.033px;">Healthy (Primary Partition)</div>
<div class="t" style="left:538px;top:221.30px;font-size:15px;line-height:15px;letter-spacing:-0.255px;width:245px;overflow:hidden;">Healthy (System, Active, Primary Partition)</div>
<div class="t" style="left:215px;top:179.30px;font-size:15px;line-height:15px;"><span style="display:inline-block;transform-origin:0 0;transform:scaleX(0.8800)">(C:)</span></div>
<div class="t" style="left:215px;top:200.30px;font-size:15px;line-height:15px;"><span style="display:inline-block;transform-origin:0 0;transform:scaleX(0.8688)">(E:)</span></div>
<div class="t" style="left:211px;top:221.30px;font-size:15px;line-height:15px;"><span style="display:inline-block;transform-origin:0 0;transform:scaleX(0.8507)">SYSTEM RESERVED</span></div>
<div class="t" style="left:795.5px;top:94.80px;font-size:15px;line-height:15px;font-weight:bold;"><span style="display:inline-block;transform-origin:0 0;transform:scaleX(0.9452)">Actions</span></div>
<div class="t" style="left:798px;top:124.30px;font-size:15px;line-height:15px;letter-spacing:-0.126px;">Disk Management</div>
<div class="t" style="left:828.5px;top:153.80px;font-size:15px;line-height:15px;letter-spacing:0.023px;">More Actions</div>
<div class="t" style="left:220.5px;top:407.30px;font-size:15px;line-height:15px;font-weight:bold;letter-spacing:-0.367px;">Disk 0</div>
<div class="t" style="left:200px;top:427.30px;font-size:15px;line-height:15px;"><span style="display:inline-block;transform-origin:0 0;transform:scaleX(0.9267)">Basic</span></div>
<div class="t" style="left:200px;top:447.30px;font-size:15px;line-height:15px;"><span style="display:inline-block;transform-origin:0 0;transform:scaleX(0.9133)">465.76 GB</span></div>
<div class="t" style="left:200px;top:467.30px;font-size:15px;line-height:15px;letter-spacing:-0.060px;">Online</div>
<div class="t" style="left:332px;top:429.30px;font-size:15px;line-height:15px;font-weight:bold;width:27.5px;overflow:hidden;"><span style="display:inline-block;transform-origin:0 0;transform:scaleX(0.8429)">SYSTEM RESERVED</span></div>
<div class="t" style="left:332px;top:449.30px;font-size:15px;line-height:15px;letter-spacing:-0.344px;width:27.5px;overflow:hidden;">100 MB NTFS</div>
<div class="t" style="left:332px;top:469.30px;font-size:15px;line-height:15px;width:27.5px;overflow:hidden;">Healthy (System, Active</div>
<div class="t" style="left:384px;top:429.30px;font-size:15px;line-height:15px;font-weight:bold;"><span style="display:inline-block;transform-origin:0 0;transform:scaleX(0.8905)">(C:)</span></div>
<div class="t" style="left:375px;top:449.30px;font-size:15px;line-height:15px;"><span style="display:inline-block;transform-origin:0 0;transform:scaleX(0.8995)">403.30 GB NTFS</span></div>
<div class="t" style="left:375px;top:469.30px;font-size:15px;line-height:15px;width:104.5px;overflow:hidden;">Healthy (Boot, Page File</div>
<div class="t" style="left:495.5px;top:449.30px;font-size:15px;line-height:15px;"><span style="display:inline-block;transform-origin:0 0;transform:scaleX(0.8960)">31.79 GB</span></div>
<div class="t" style="left:495.5px;top:469.30px;font-size:15px;line-height:15px;width:79.5px;overflow:hidden;">Healthy (Primary Partition)</div>
<div class="t" style="left:591.5px;top:449.30px;font-size:15px;line-height:15px;"><span style="display:inline-block;transform-origin:0 0;transform:scaleX(0.8865)">5.49 GB</span></div>
<div class="t" style="left:591.5px;top:469.30px;font-size:15px;line-height:15px;width:63px;overflow:hidden;">Healthy (Primary Partition)</div>
<div class="t" style="left:671.5px;top:449.30px;font-size:15px;line-height:15px;"><span style="display:inline-block;transform-origin:0 0;transform:scaleX(0.8960)">25.07 GB</span></div>
<div class="t" style="left:671.5px;top:469.30px;font-size:15px;line-height:15px;letter-spacing:-0.309px;width:81px;overflow:hidden;">Healthy (OEM Partition)</div>
<div class="t" style="left:220.3px;top:538.80px;font-size:15px;line-height:15px;font-weight:bold;letter-spacing:-0.071px;">CD-ROM 0</div>
<div class="t" style="left:200.3px;top:558.90px;font-size:15px;line-height:15px;"><span style="display:inline-block;transform-origin:0 0;transform:scaleX(0.9469)">DVD (D:)</span></div>
<div class="t" style="left:200.3px;top:599.00px;font-size:15px;line-height:15px;letter-spacing:0.050px;">No Media</div>
<div class="t" style="left:212px;top:656.30px;font-size:15px;line-height:15px;">Unallocated</div>
<div class="t" style="left:313px;top:656.30px;font-size:15px;line-height:15px;letter-spacing:0.106px;">Primary partition</div>
<div class="t" style="left:445px;top:656.30px;font-size:15px;line-height:15px;letter-spacing:0.115px;">Extended partition</div>
<div class="t" style="left:589px;top:656.30px;font-size:15px;line-height:15px;"><span style="display:inline-block;transform-origin:0 0;transform:scaleX(0.9328)">Free space</span></div>
</body></html>
